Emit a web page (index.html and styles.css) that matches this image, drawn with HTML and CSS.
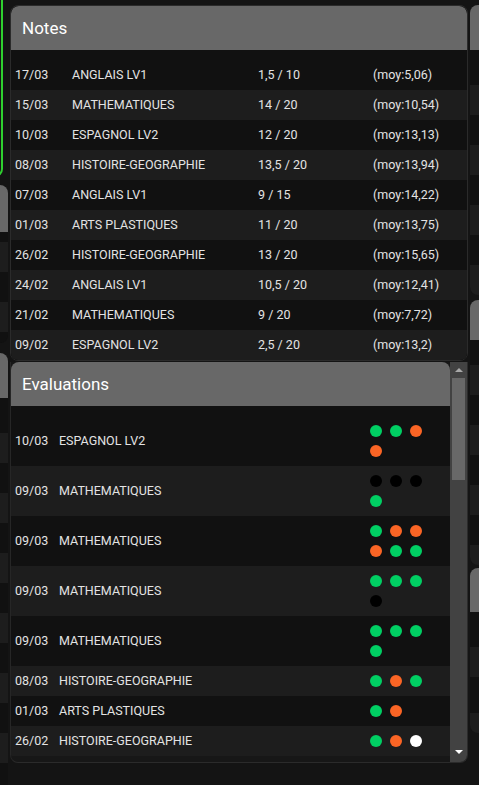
FILE: index.html
```html
<!DOCTYPE html>
<html lang="fr">
<head>
<meta charset="utf-8">
<title>Pronote</title>
<link rel="stylesheet" href="styles.css">
</head>
<body>
<div class="board">
  <div class="col-side col-left">
    <div class="ghost green"></div>
    <div class="ghost g2">
      <div class="ghost-head h49"></div>
      <div class="stripes">
        <div class="s d h10"></div>
        <div class="s l"></div><div class="s d"></div><div class="s l"></div><div class="s d h11"></div>
      </div>
    </div>
    <div class="ghost g3">
      <div class="ghost-head h45"></div>
      <div class="stripes">
        <div class="s d h35"></div>
        <div class="s l"></div><div class="s d"></div><div class="s l"></div><div class="s d"></div>
        <div class="s l"></div><div class="s d"></div><div class="s l"></div><div class="s d"></div>
        <div class="s l"></div><div class="s d"></div><div class="s l"></div><div class="s d"></div>
      </div>
    </div>
  </div>

  <div class="col-main">
    <section class="card notes">
      <header class="card-head">Notes</header>
      <div class="rows">
        <div class="row"><span>17/03</span><span>ANGLAIS LV1</span><span>1,5 / 10</span><span>(moy:5,06)</span></div>
        <div class="row"><span>15/03</span><span>MATHEMATIQUES</span><span>14 / 20</span><span>(moy:10,54)</span></div>
        <div class="row"><span>10/03</span><span>ESPAGNOL LV2</span><span>12 / 20</span><span>(moy:13,13)</span></div>
        <div class="row"><span>08/03</span><span>HISTOIRE-GEOGRAPHIE</span><span>13,5 / 20</span><span>(moy:13,94)</span></div>
        <div class="row"><span>07/03</span><span>ANGLAIS LV1</span><span>9 / 15</span><span>(moy:14,22)</span></div>
        <div class="row"><span>01/03</span><span>ARTS PLASTIQUES</span><span>11 / 20</span><span>(moy:13,75)</span></div>
        <div class="row"><span>26/02</span><span>HISTOIRE-GEOGRAPHIE</span><span>13 / 20</span><span>(moy:15,65)</span></div>
        <div class="row"><span>24/02</span><span>ANGLAIS LV1</span><span>10,5 / 20</span><span>(moy:12,41)</span></div>
        <div class="row"><span>21/02</span><span>MATHEMATIQUES</span><span>9 / 20</span><span>(moy:7,72)</span></div>
        <div class="row"><span>09/02</span><span>ESPAGNOL LV2</span><span>2,5 / 20</span><span>(moy:13,2)</span></div>
      </div>
    </section>

    <section class="eval">
      <div class="eval-card">
        <header class="card-head">Evaluations</header>
        <div class="rows">
          <div class="erow"><span>10/03</span><span>ESPAGNOL LV2</span><span class="dots"><i class="g"></i><i class="g"></i><i class="o"></i><i class="o"></i></span></div>
          <div class="erow"><span>09/03</span><span>MATHEMATIQUES</span><span class="dots"><i class="k"></i><i class="k"></i><i class="k"></i><i class="g"></i></span></div>
          <div class="erow"><span>09/03</span><span>MATHEMATIQUES</span><span class="dots"><i class="g"></i><i class="o"></i><i class="o"></i><i class="o"></i><i class="g"></i><i class="g"></i></span></div>
          <div class="erow"><span>09/03</span><span>MATHEMATIQUES</span><span class="dots"><i class="g"></i><i class="g"></i><i class="g"></i><i class="k"></i></span></div>
          <div class="erow"><span>09/03</span><span>MATHEMATIQUES</span><span class="dots"><i class="g"></i><i class="g"></i><i class="g"></i><i class="g"></i></span></div>
          <div class="erow"><span>08/03</span><span>HISTOIRE-GEOGRAPHIE</span><span class="dots"><i class="g"></i><i class="o"></i><i class="g"></i></span></div>
          <div class="erow"><span>01/03</span><span>ARTS PLASTIQUES</span><span class="dots"><i class="g"></i><i class="o"></i></span></div>
          <div class="erow"><span>26/02</span><span>HISTOIRE-GEOGRAPHIE</span><span class="dots"><i class="g"></i><i class="o"></i><i class="w"></i></span></div>
        </div>
      </div>
      <div class="scrollbar">
        <div class="sb-btn"><b class="arrow-up"></b></div>
        <div class="sb-thumb"></div>
        <div class="sb-fill"></div>
        <div class="sb-btn down"><b class="arrow-down"></b></div>
      </div>
    </section>
  </div>

  <div class="col-side col-right">
    <div class="ghost r1">
      <div class="ghost-head h45"></div>
      <div class="stripes">
        <div class="s d h35"></div>
        <div class="s l"></div><div class="s d"></div><div class="s l"></div><div class="s d"></div>
        <div class="s l"></div><div class="s d"></div><div class="s l"></div>
      </div>
    </div>
    <div class="ghost r2">
      <div class="ghost-head h40"></div>
      <div class="stripes">
        <div class="s d h25"></div>
        <div class="s l"></div><div class="s d"></div><div class="s l"></div><div class="s d"></div>
        <div class="s l"></div><div class="s d"></div><div class="s l h20"></div>
      </div>
    </div>
    <div class="ghost r3">
      <div class="ghost-head h44"></div>
      <div class="stripes">
        <div class="s d h35"></div>
        <div class="s l"></div><div class="s d h36"></div><div class="s l h20"></div>
      </div>
    </div>
  </div>
</div>
</body>
</html>
```

FILE: styles.css
```css
html, body {
  margin: 0;
  padding: 0;
}
body {
  background: #141414;
  width: 479px;
  height: 785px;
  overflow: hidden;
  font-family: Roboto, "Noto Sans", sans-serif;
  color: #e3e3e3;
}
.board {
  display: flex;
  align-items: flex-start;
  gap: 2px;
  margin-left: -192px;
}
.col-side {
  width: 200px;
  flex: none;
  display: flex;
  flex-direction: column;
}
.col-main {
  width: 458px;
  flex: none;
  display: flex;
  flex-direction: column;
  gap: 1px;
  padding-top: 5px;
}

/* background cards (partially visible) */
.ghost {
  border-radius: 8px;
  overflow: hidden;
  background: #111;
}
.ghost.green {
  margin-top: -20px;
  margin-right: 5px;
  height: 193px;
  border: 2px solid #2fd02f;
  background: #161616;
}
.ghost.g2 { margin-top: 8px; }
.ghost.g3 { margin-top: 10px; }
.ghost.r1 { margin-top: 5px; }
.ghost.r2 { margin-top: 5px; }
.ghost.r3 { margin-top: 3px; }
.ghost-head { background: #686868; }
.h49 { height: 47px; }
.h45 { height: 45px; }
.h44 { height: 44px; }
.h40 { height: 40px; }
.stripes { display: flex; flex-direction: column; }
.s { height: 30px; }
.s.d { background: #111; }
.s.l { background: #1d1d1d; }
.s.h10 { height: 10px; }
.s.h11 { height: 11px; }
.s.h20 { height: 20px; }
.s.h25 { height: 25px; }
.s.h35 { height: 35px; }
.s.h36 { height: 36px; }

/* main cards */
.card {
  border: 1px solid #2b2b2b;
  border-radius: 8px;
  overflow: hidden;
  background: #111;
}
.card-head {
  height: 44px;
  background: #686868;
  color: #fff;
  font-size: 17px;
  display: flex;
  align-items: center;
  padding-left: 11px;
  border-radius: 8px 8px 0 0;
}
.rows {
  padding-top: 10px;
  background: #111;
  font-size: 12.5px;
}
.row {
  display: grid;
  grid-template-columns: 57px 186px 115px 1fr;
  align-items: center;
  height: 30px;
  padding: 0 0 1px 4px;
  box-sizing: border-box;
}
.row:nth-child(even), .erow:nth-child(even) {
  background: #1d1d1d;
}

.eval {
  display: flex;
  height: 400px;
  border: 1px solid #2b2b2b;
  border-top: none;
  border-left-color: #262626;
  border-radius: 0 0 8px 8px;
  overflow: hidden;
  background: #171717;
}
.eval-card {
  flex: 1;
  min-width: 0;
  align-self: flex-start;
}
.erow {
  display: grid;
  grid-template-columns: 44px 311px 1fr;
  align-items: center;
  padding: 0 0 0 4px;
}
.erow > span:not(.dots) {
  padding-bottom: 2px;
}
.dots {
  display: flex;
  flex-wrap: wrap;
  gap: 8px;
  width: 60px;
  padding: 9px 0;
}
.dots i {
  width: 12px;
  height: 12px;
  border-radius: 50%;
  display: block;
}
.dots .g { background: #00cf63; }
.dots .o { background: #fb6525; }
.dots .k { background: #000; }
.dots .w { background: #fff; }

.scrollbar {
  width: 17px;
  flex: none;
  background: #424242;
  display: flex;
  flex-direction: column;
  align-items: center;
}
.sb-btn {
  height: 16px;
  width: 100%;
  display: flex;
  align-items: center;
  justify-content: center;
}
.sb-btn.down { height: 17px; align-items: flex-start; padding-top: 5px; box-sizing: border-box; }
.arrow-up {
  width: 0;
  height: 0;
  border-left: 4px solid transparent;
  border-right: 4px solid transparent;
  border-bottom: 4px solid #a8a8a8;
}
.arrow-down {
  width: 0;
  height: 0;
  border-left: 4px solid transparent;
  border-right: 4px solid transparent;
  border-top: 4px solid #fff;
}
.sb-thumb {
  width: 13px;
  height: 102px;
  background: #686868;
}
.sb-fill { flex: 1; }
```
